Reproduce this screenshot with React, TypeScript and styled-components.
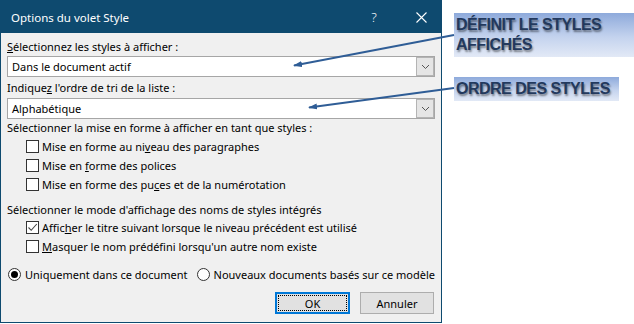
import React from 'react';
import styled, { createGlobalStyle } from 'styled-components';

const GlobalStyle = createGlobalStyle`
  html, body {
    margin: 0;
    padding: 0;
    background: #ffffff;
  }
  body {
    font-family: 'Noto Sans', 'Liberation Sans', sans-serif;
  }
`;

const navy = '#0e4a6f';

const Page = styled.div`
  position: relative;
  width: 634px;
  height: 324px;
  display: flex;
  align-items: flex-start;
  overflow: hidden;
`;

const Dialog = styled.div`
  flex-shrink: 0;
  width: 440px;
  height: 321px;
  border: 1px solid ${navy};
  background: #f0f0f0;
  display: flex;
  flex-direction: column;
  font-size: 11px;
  color: #000;
`;

const TitleBar = styled.div`
  flex-shrink: 0;
  height: 32px;
  background: ${navy};
  color: #fff;
  display: flex;
  align-items: center;
  padding-left: 10px;
  font-size: 11.5px;
`;

const Title = styled.div`
  flex: 1;
  margin-top: 1px;
`;

const TitleButton = styled.div<{ w: number; mr?: number }>`
  width: ${({ w }) => w}px;
  margin-right: ${({ mr }) => mr || 0}px;
  display: flex;
  justify-content: center;
  font-size: 13px;
  font-weight: 300;
`;

const Body = styled.div`
  padding: 7px 6px 0 6px;
  display: flex;
  flex-direction: column;
`;

const Label = styled.div<{ mt?: number }>`
  height: 14px;
  line-height: 14px;
  margin-top: ${({ mt }) => mt || 0}px;
  white-space: nowrap;
`;

const Select = styled.div<{ mt?: number }>`
  flex-shrink: 0;
  height: 19px;
  margin-top: ${({ mt }) => mt || 0}px;
  border: 1px solid #a6a6a6;
  background: #fff;
  display: flex;
  align-items: center;
  padding-left: 4px;
`;

const SelectText = styled.span`
  flex: 1;
`;

const DropButton = styled.div`
  width: 16px;
  height: 17px;
  border: 1px solid #b4b4b4;
  background: #e5e5e5;
  display: flex;
  align-items: center;
  justify-content: center;
`;

const CheckRow = styled.div<{ mt?: number }>`
  flex-shrink: 0;
  height: 19px;
  display: flex;
  align-items: center;
  padding-left: 19px;
  margin-top: ${({ mt }) => mt || 0}px;
  white-space: nowrap;
`;

const Box = styled.div`
  width: 11px;
  height: 11px;
  border: 1px solid #333;
  background: #fff;
  margin-right: 3px;
  display: flex;
  align-items: center;
  justify-content: center;
`;

const Text = styled.span`
  white-space: pre;
`;

const Key = styled.span`
  text-decoration: underline;
`;

const RadioLine = styled.div`
  flex-shrink: 0;
  display: flex;
  align-items: center;
  margin-top: 9px;
  height: 18px;
  padding-left: 1px;
  white-space: nowrap;
`;

const RadioItem = styled.div<{ w?: number }>`
  display: flex;
  align-items: center;
  width: ${({ w }) => (w ? `${w}px` : 'auto')};
`;

const Radio = styled.div<{ on?: boolean }>`
  width: 11px;
  height: 11px;
  border: 1px solid #333;
  border-radius: 50%;
  background: #fff;
  margin-right: 4px;
  display: flex;
  align-items: center;
  justify-content: center;

  &::after {
    content: '';
    display: ${({ on }) => (on ? 'block' : 'none')};
    width: 7px;
    height: 7px;
    border-radius: 50%;
    background: #000;
  }
`;

const ButtonRow = styled.div`
  flex-shrink: 0;
  display: flex;
  justify-content: flex-end;
  gap: 10px;
  margin-top: 9px;
  padding-right: 1px;
`;

const Button = styled.div<{ primary?: boolean }>`
  width: ${({ primary }) => (primary ? 71 : 72)}px;
  height: ${({ primary }) => (primary ? 18 : 20)}px;
  border: ${({ primary }) => (primary ? '2px solid #0078d7' : '1px solid #adadad')};
  background: #e1e1e1;
  display: flex;
  align-items: center;
  justify-content: center;
  position: relative;

  &::after {
    content: '';
    display: ${({ primary }) => (primary ? 'block' : 'none')};
    position: absolute;
    inset: 1px;
    border: 1px dotted #000;
  }
`;

const Notes = styled.div`
  display: flex;
  flex-direction: column;
  align-items: flex-start;
  margin-left: 12px;
  padding-top: 13px;
`;

const Callout = styled.div<{ mt?: number; w: number }>`
  width: ${({ w }) => w}px;
  margin-top: ${({ mt }) => mt || 0}px;
  padding: 2px 0 2px 2px;
  box-sizing: border-box;
  background: linear-gradient(180deg, #8eaadb 0%, #c4d3ee 55%, #e2e9f6 100%);
  font-family: 'Liberation Sans', Arial, sans-serif;
  font-weight: bold;
  font-size: 16px;
  line-height: 20px;
  letter-spacing: -0.5px;
  color: #23395d;
  text-shadow: 1px 1.5px 2px rgba(0, 0, 0, 0.45);
  white-space: nowrap;
`;

const Arrows = styled.svg`
  position: absolute;
  left: 0;
  top: 0;
  pointer-events: none;
`;

const Chevron = () => (
  <svg width="9" height="6" viewBox="0 0 9 6">
    <path d="M1 1 L4.5 4.5 L8 1" fill="none" stroke="#555" strokeWidth="1" />
  </svg>
);

const Tick = () => (
  <svg width="11" height="11" viewBox="0 0 11 11">
    <path d="M1.5 5.5 L4.2 8.3 L9.8 2" fill="none" stroke="#444" strokeWidth="1.1" />
  </svg>
);

const Cross = () => (
  <svg width="11" height="11" viewBox="0 0 11 11">
    <path d="M0.5 0.5 L10.5 10.5 M10.5 0.5 L0.5 10.5" stroke="#fff" strokeWidth="1.1" />
  </svg>
);

export default function App() {
  return (
    <>
      <GlobalStyle />
      <Page>
        <Dialog>
          <TitleBar>
            <Title>Options du volet Style</Title>
            <TitleButton w={30} mr={12}>?</TitleButton>
            <TitleButton w={40}><Cross /></TitleButton>
          </TitleBar>
          <Body>
            <Label>
              <Key>S</Key>électionnez les styles à afficher :
            </Label>
            <Select mt={2}>
              <SelectText>Dans le document actif</SelectText>
              <DropButton><Chevron /></DropButton>
            </Select>
            <Label mt={4}>
              Indique<Key>z</Key> l'ordre de tri de la liste :
            </Label>
            <Select mt={3}>
              <SelectText>Alphabétique</SelectText>
              <DropButton><Chevron /></DropButton>
            </Select>
            <Label mt={2}>Sélectionner la mise en forme à afficher en tant que styles :</Label>
            <CheckRow mt={2}>
              <Box />
              <Text>Mise en forme au ni<Key>v</Key>eau des paragraphes</Text>
            </CheckRow>
            <CheckRow>
              <Box />
              <Text>Mise en <Key>f</Key>orme des polices</Text>
            </CheckRow>
            <CheckRow>
              <Box />
              <Text>Mise en forme des pu<Key>c</Key>es et de la numérotation</Text>
            </CheckRow>
            <Label mt={9}>Sélectionner le mode d'affichage des noms de styles intégrés</Label>
            <CheckRow mt={1}>
              <Box><Tick /></Box>
              <Text>Affic<Key>h</Key>er le titre suivant lorsque le niveau précédent est utilisé</Text>
            </CheckRow>
            <CheckRow>
              <Box />
              <Text><Key>M</Key>asquer le nom prédéfini lorsqu'un autre nom existe</Text>
            </CheckRow>
            <RadioLine>
              <RadioItem w={190}>
                <Radio on />
                <Text>Uniquement dans ce document</Text>
              </RadioItem>
              <RadioItem>
                <Radio />
                <Text>Nouveaux documents basés sur ce modèle</Text>
              </RadioItem>
            </RadioLine>
            <ButtonRow>
              <Button primary>OK</Button>
              <Button>Annuler</Button>
            </ButtonRow>
          </Body>
        </Dialog>
        <Notes>
          <Callout w={180}>
            DÉFINIT LE STYLES
            <br />
            AFFICHÉS
          </Callout>
          <Callout w={165} mt={20}>ORDRE DES STYLES</Callout>
        </Notes>
        <Arrows width="634" height="324" viewBox="0 0 634 324">
          <defs>
            <marker id="head" markerWidth="9" markerHeight="6" refX="8" refY="3" orient="auto" markerUnits="userSpaceOnUse">
              <path d="M0 0 L9 3 L0 6 Z" fill="#2f5d96" />
            </marker>
          </defs>
          <line x1="454" y1="35" x2="294" y2="65.5" stroke="#2f5d96" strokeWidth="1.8" markerEnd="url(#head)" />
          <line x1="454" y1="88" x2="309" y2="107.5" stroke="#2f5d96" strokeWidth="1.8" markerEnd="url(#head)" />
        </Arrows>
      </Page>
    </>
  );
}
